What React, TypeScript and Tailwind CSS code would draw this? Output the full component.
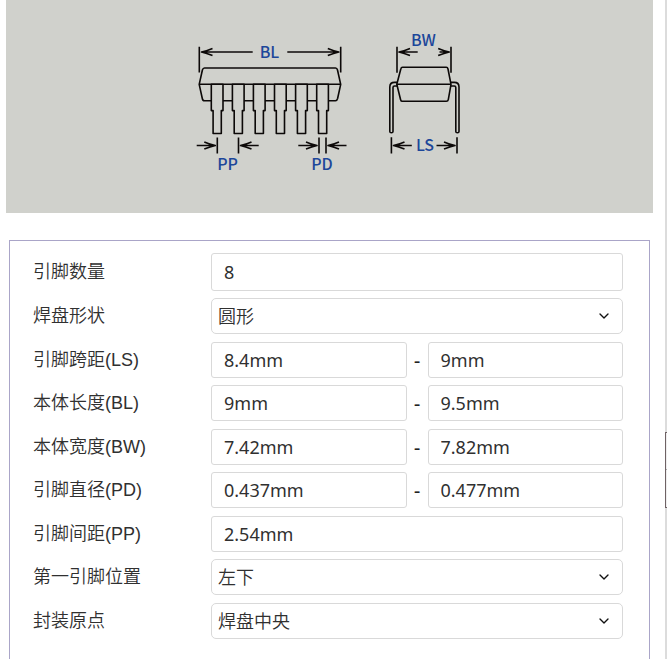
import type { ReactNode } from 'react';
import { ChevronDown } from 'lucide-react';

const fieldBox = 'w-full min-w-0 border border-[#d9d9d9] bg-white text-lg text-[#303030] outline-none';
const fieldFont = "font-['Noto_Sans','Noto_Sans_CJK_SC',sans-serif]";

const LEADS = [211.3, 232.4, 253.4, 274.5, 295.6, 316.7];

function Arrow({ tip, tail, y }: { tip: number; tail: number; y: number }) {
  const d = tip < tail ? 1 : -1;
  return (
    <path
      d={`M${tail} ${y}H${tip} M${tip + 11 * d} ${y - 3.6}Q${tip + 5 * d} ${y - 1} ${tip} ${y}Q${tip + 5 * d} ${y + 1} ${tip + 11 * d} ${y + 3.6}`}
    />
  );
}

function PackageDrawing() {
  return (
    <svg viewBox="190 25 279 150" className="h-[150px] w-[279px]" role="img" aria-label="DIP">
      <g fill="none" stroke="#0c0908" strokeWidth="1.6" strokeLinejoin="round">
        {/* front view */}
        <path d="M204.5 68H335.5Q337 68 337.5 70L340.7 84.3L337.6 98.5Q337 100.7 335.5 100.7H204.5Q202.7 100.7 202.3 98.5L199.2 84.3L202.4 70Q203 68 204.5 68Z" />
        {LEADS.map((x) => (
          <path
            key={x}
            fill="#d0d1cc"
            d={`M${x} 84.3V110.6H${x + 1.8}V133.5H${x + 10}V110.6H${x + 11.7}V84.3Z`}
          />
        ))}
        <path d="M199.2 84.3H340.7" />
        <path d="M199.3 46.7V72.5M340.7 46.7V72.5" />
        <Arrow tip={201.5} tail={252.7} y={52} />
        <Arrow tip={338.8} tail={287.3} y={52} />
        <path d="M217.3 137.5V153.5M238.5 137.5V153.5M319 137.5V153.5M326 137.5V153.5" />
        <Arrow tip={215.3} tail={196.7} y={145.5} />
        <Arrow tip={240.5} tail={258.7} y={145.5} />
        <Arrow tip={317} tail={298.3} y={145.5} />
        <Arrow tip={328} tail={346.5} y={145.5} />

        {/* side view */}
        <path d="M402.5 67.3H446.3Q447.6 67.3 448 69L451 84.3L448.3 99.7Q448 101.3 446.3 101.3H402.3Q401 101.3 400.6 99.7L396.8 84.3L400.8 69Q401.2 67.3 402.5 67.3Z" />
        <path d="M396.8 84.3H451" />
        <path d="M397 82.4H394.5Q389.8 82.4 389.8 87V131.5Q389.8 132.8 391.4 132.8Q393 132.8 393 131.5V87.5Q393 86 394.5 86H397" />
        <path d="M451 82.4H454.3Q459 82.4 459 87V131.5Q459 132.8 457.4 132.8Q455.8 132.8 455.8 131.5V87.5Q455.8 86 454.3 86H451" />
        <path d="M397 46.7V72.7M451 46.7V72.7M391.4 137.3V153.5M457 137.3V153.5" />
        <Arrow tip={399} tail={417.7} y={52} />
        <Arrow tip={449.2} tail={439.5} y={52} />
        <Arrow tip={393.5} tail={411.8} y={145.5} />
        <Arrow tip={455} tail={436.5} y={145.5} />
      </g>
      <g
        fill="#1d479a"
        textAnchor="middle"
        className="font-['Noto_Sans_CJK_SC',sans-serif] text-base font-medium"
      >
        <text x="269.5" y="58">BL</text>
        <text x="227.5" y="170">PP</text>
        <text x="322" y="170">PD</text>
        <text x="423.5" y="46">BW</text>
        <text x="425" y="151">LS</text>
      </g>
    </svg>
  );
}

function Row({ id, label, children }: { id: string; label: string; children: ReactNode }) {
  return (
    <div className="flex items-center odd:mt-2 even:mt-[7px]">
      <label htmlFor={id} className="w-[178px] shrink-0 text-lg leading-6 font-[350] text-[#303030]">{label}</label>
      <div className="flex min-w-0 flex-1 items-center">{children}</div>
    </div>
  );
}

function TextRow({ id, label, value, tall = false }: {
  id: string; label: string; value: string; tall?: boolean;
}) {
  return (
    <Row id={id} label={label}>
      <input id={id} defaultValue={value} className={`${fieldBox} ${fieldFont} rounded-[3px] px-3 ${tall ? 'h-[38px]' : 'h-9'}`} />
    </Row>
  );
}

function RangeRow({ id, label, min, max }: { id: string; label: string; min: string; max: string }) {
  return (
    <Row id={id} label={label}>
      <input id={id} defaultValue={min} className={`${fieldBox} ${fieldFont} h-9 rounded-[3px] px-3`} />
      <span className="w-[21px] shrink-0 pt-0.5 text-center text-xl leading-6 text-[#222]">-</span>
      <input aria-label={`${label} max`} defaultValue={max} className={`${fieldBox} ${fieldFont} h-9 rounded-[3px] px-3`} />
    </Row>
  );
}

function SelectRow({ id, label, value }: { id: string; label: string; value: string }) {
  return (
    <Row id={id} label={label}>
      <div className="relative w-full">
        <select id={id} defaultValue={value} className={`${fieldBox} ${fieldFont} h-9 appearance-none rounded-[5px] px-1.5 font-[350]`}>
          <option>{value}</option>
        </select>
        <ChevronDown className="pointer-events-none absolute top-2.5 right-[11px] size-4 text-[#111]" />
      </div>
    </Row>
  );
}

export default function App() {
  return (
    <div className="flex min-h-screen bg-white font-['Liberation_Sans','Noto_Sans_CJK_SC',sans-serif]">
      <main className="flex min-w-0 flex-1 flex-col pr-3 pl-1.5">
        <div className="flex h-[213px] shrink-0 justify-center bg-[#d0d1cc] pt-[25px]">
          <PackageDrawing />
        </div>
        <form className="mx-[3px] mt-[27px] flex-1 border border-b-0 border-[#aaa5c8] pt-1 pr-[26px] pl-[23px]">
          <TextRow id="pins" label="引脚数量" value="8" tall />
          <SelectRow id="pad" label="焊盘形状" value="圆形" />
          <RangeRow id="ls" label="引脚跨距(LS)" min="8.4mm" max="9mm" />
          <RangeRow id="bl" label="本体长度(BL)" min="9mm" max="9.5mm" />
          <RangeRow id="bw" label="本体宽度(BW)" min="7.42mm" max="7.82mm" />
          <RangeRow id="pd" label="引脚直径(PD)" min="0.437mm" max="0.477mm" />
          <TextRow id="pp" label="引脚间距(PP)" value="2.54mm" />
          <SelectRow id="first" label="第一引脚位置" value="左下" />
          <SelectRow id="origin" label="封装原点" value="焊盘中央" />
        </form>
      </main>
      {/* edge of the neighbouring canvas */}
      <aside className="w-0.5 shrink-0 bg-[#dcdcdc] pt-[432px]">
        <div className="h-[76px] border-y border-l border-[#6f6265] bg-[#eee] pt-9">
          <div className="h-px bg-[#aaa]" />
        </div>
      </aside>
    </div>
  );
}
